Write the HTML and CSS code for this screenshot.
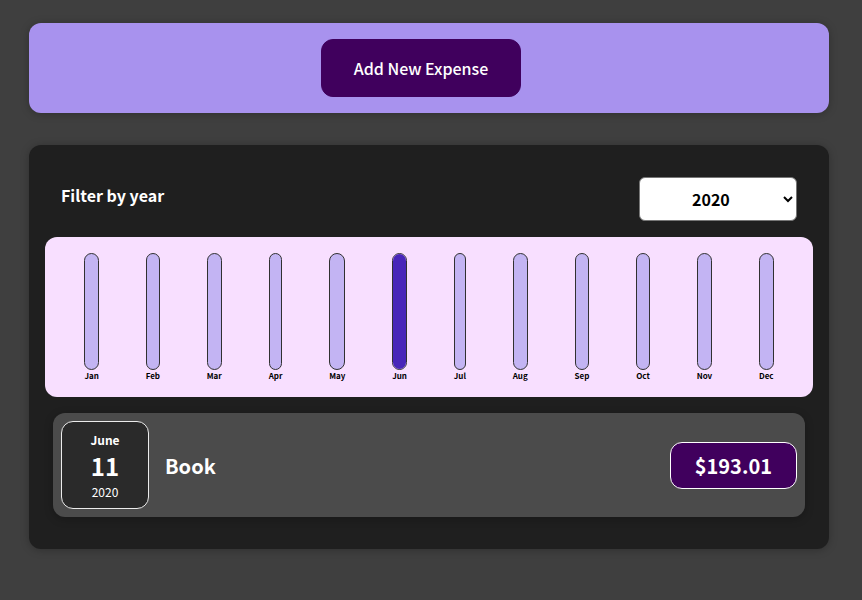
FILE: index.html
```html
<!DOCTYPE html>
<html>
<head>
<meta charset="utf-8">
<link rel="stylesheet" href="styles.css">
</head>
<body>
<div class="app">
  <div class="new-expense">
    <button class="new-expense__btn">Add New Expense</button>
  </div>
  <div class="expenses">
    <div class="expenses-filter">
      <div class="expenses-filter__control">
        <label>Filter by year</label>
        <select>
          <option>2022</option>
          <option>2021</option>
          <option selected>2020</option>
          <option>2019</option>
        </select>
      </div>
    </div>
    <div class="chart">
      <div class="chart-bar"><div class="chart-bar__inner"><div class="chart-bar__fill" style="height:0%"></div></div><div class="chart-bar__label">Jan</div></div>
      <div class="chart-bar"><div class="chart-bar__inner"><div class="chart-bar__fill" style="height:0%"></div></div><div class="chart-bar__label">Feb</div></div>
      <div class="chart-bar"><div class="chart-bar__inner"><div class="chart-bar__fill" style="height:0%"></div></div><div class="chart-bar__label">Mar</div></div>
      <div class="chart-bar"><div class="chart-bar__inner"><div class="chart-bar__fill" style="height:0%"></div></div><div class="chart-bar__label">Apr</div></div>
      <div class="chart-bar"><div class="chart-bar__inner"><div class="chart-bar__fill" style="height:0%"></div></div><div class="chart-bar__label">May</div></div>
      <div class="chart-bar"><div class="chart-bar__inner"><div class="chart-bar__fill" style="height:100%"></div></div><div class="chart-bar__label">Jun</div></div>
      <div class="chart-bar"><div class="chart-bar__inner"><div class="chart-bar__fill" style="height:0%"></div></div><div class="chart-bar__label">Jul</div></div>
      <div class="chart-bar"><div class="chart-bar__inner"><div class="chart-bar__fill" style="height:0%"></div></div><div class="chart-bar__label">Aug</div></div>
      <div class="chart-bar"><div class="chart-bar__inner"><div class="chart-bar__fill" style="height:0%"></div></div><div class="chart-bar__label">Sep</div></div>
      <div class="chart-bar"><div class="chart-bar__inner"><div class="chart-bar__fill" style="height:0%"></div></div><div class="chart-bar__label">Oct</div></div>
      <div class="chart-bar"><div class="chart-bar__inner"><div class="chart-bar__fill" style="height:0%"></div></div><div class="chart-bar__label">Nov</div></div>
      <div class="chart-bar"><div class="chart-bar__inner"><div class="chart-bar__fill" style="height:0%"></div></div><div class="chart-bar__label">Dec</div></div>
    </div>
    <ul class="expenses-list">
      <li class="expense-item">
        <div class="expense-date">
          <div class="expense-date__month">June</div>
          <div class="expense-date__day">11</div>
          <div class="expense-date__year">2020</div>
        </div>
        <div class="expense-item__description">
          <h2>Book</h2>
          <div class="expense-item__price">$193.01</div>
        </div>
      </li>
    </ul>
  </div>
</div>
</body>
</html>
```
FILE: styles.css
```css
* { box-sizing: border-box; }
html { font-family: "Noto Sans CJK JP", "Noto Sans", sans-serif; }
body { margin: 0; background-color: #3f3f3f; }
.app { padding-top: 23px; padding-left: 29px; }

.new-expense {
  background-color: #a892ee;
  padding: 1rem;
  width: 800px;
  border-radius: 12px;
  text-align: center;
  box-shadow: 0 1px 8px rgba(0, 0, 0, 0.25);
}
.new-expense__btn {
  font: inherit;
  font-weight: 500;
  cursor: pointer;
  padding: 1rem 2rem;
  border: 1px solid #40005d;
  background-color: #40005d;
  color: white;
  border-radius: 12px;
  margin-right: 1rem;
}

.expenses {
  padding: 1rem;
  background-color: rgb(31, 31, 31);
  margin: 2rem 0;
  width: 800px;
  border-radius: 12px;
  box-shadow: 0 1px 8px rgba(0, 0, 0, 0.25);
}
.expenses-filter { color: white; padding: 0 1rem; }
.expenses-filter__control {
  display: flex;
  width: 100%;
  align-items: center;
  justify-content: space-between;
  margin: 1rem 0;
}
.expenses-filter__control label { font-weight: bold; margin-bottom: 0.5rem; }
.expenses-filter__control select {
  font: inherit;
  width: 158px;
  padding: 0.5rem 3rem;
  font-weight: bold;
  border-radius: 6px;
  background: white;
  color: black;
  border: 1px solid #767676;
}

.chart {
  padding: 1rem;
  border-radius: 12px;
  background-color: #f8dfff;
  text-align: center;
  display: flex;
  justify-content: space-around;
  height: 10rem;
}
.chart-bar {
  height: 100%;
  display: flex;
  flex-direction: column;
  align-items: center;
}
.chart-bar__inner {
  height: 100%;
  width: 100%;
  border: 1px solid #313131;
  border-radius: 12px;
  background-color: #c3b4f3;
  overflow: hidden;
  display: flex;
  flex-direction: column;
  justify-content: flex-end;
}
.chart-bar__fill { background-color: #4826b9; width: 100%; }
.chart-bar__label { font-weight: bold; font-size: 0.5rem; text-align: center; }

.expenses-list { list-style: none; padding: 0 0.5rem; margin: 0; }
.expense-item {
  display: flex;
  justify-content: space-between;
  align-items: center;
  box-shadow: 0 2px 8px rgba(0, 0, 0, 0.25);
  padding: 0.5rem;
  margin: 1rem 0;
  border-radius: 12px;
  background-color: #4b4b4b;
}
.expense-item__description {
  display: flex;
  flex-direction: row;
  align-items: center;
  justify-content: flex-start;
  flex: 1;
}
.expense-item__description h2 {
  font-size: 1.25rem;
  flex: 1;
  margin: 0 1rem;
  color: white;
}
.expense-item__price {
  font-size: 1.25rem;
  font-weight: bold;
  color: white;
  background-color: #40005d;
  border: 1px solid white;
  padding: 0.5rem 1.5rem;
  border-radius: 12px;
}
.expense-date {
  display: flex;
  flex-direction: column;
  width: 5.5rem;
  height: 5.5rem;
  border: 1px solid #ececec;
  background-color: #2a2a2a;
  color: white;
  border-radius: 12px;
  align-items: center;
  justify-content: center;
}
.expense-date__month { font-size: 0.75rem; font-weight: bold; }
.expense-date__year { font-size: 0.75rem; }
.expense-date__day { font-size: 1.5rem; font-weight: bold; }
```
